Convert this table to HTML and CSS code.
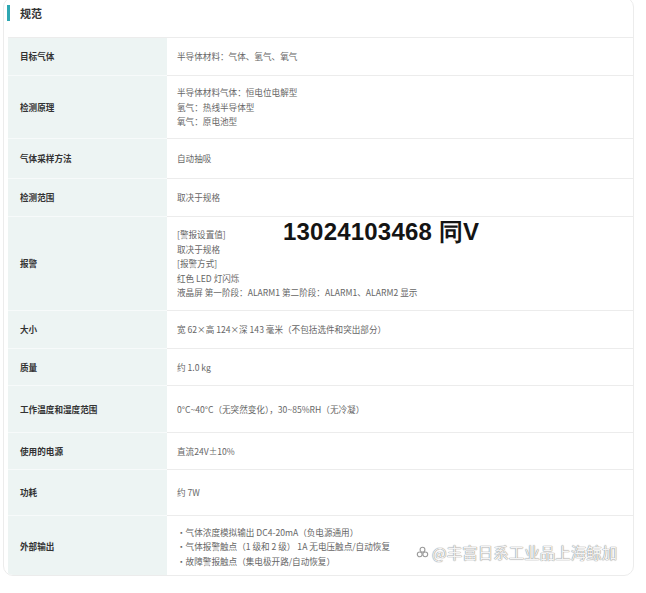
FILE: index.html
```html
<!DOCTYPE html>
<html lang="zh">
<head>
    <meta charset="UTF-8">
    <meta name="viewport" content="width=device-width, initial-scale=1.0">
    <title>规范</title>
    <link rel="stylesheet" href="styles.css">
</head>
<body>

<div class="card">
    <div class="card-head">
        <span class="accent"></span>
        <h2>规范</h2>
    </div>

    <div class="spec">
        <div class="key">目标气体</div>
        <div class="val">半导体材料：气体、氢气、氧气</div>

        <div class="key">检测原理</div>
        <div class="val">半导体材料气体：恒电位电解型<br>氢气：热线半导体型<br>氧气：原电池型</div>

        <div class="key">气体采样方法</div>
        <div class="val">自动抽吸</div>

        <div class="key">检测范围</div>
        <div class="val">取决于规格</div>

        <div class="key">报警</div>
        <div class="val">[警报设置值]<br>取决于规格<br>[报警方式]<br>红色 LED 灯闪烁<br>液晶屏 第一阶段：ALARM1 第二阶段：ALARM1、ALARM2 显示</div>

        <div class="key">大小</div>
        <div class="val">宽 62×高 124×深 143 毫米（不包括选件和突出部分）</div>

        <div class="key">质量</div>
        <div class="val">约 1.0 kg</div>

        <div class="key">工作温度和湿度范围</div>
        <div class="val">0°C~40°C（无突然变化），30~85%RH（无冷凝）</div>

        <div class="key">使用的电源</div>
        <div class="val">直流24V±10%</div>

        <div class="key">功耗</div>
        <div class="val">约 7W</div>

        <div class="key last">外部输出</div>
        <div class="val last">・气体浓度模拟输出 DC4-20mA（负电源通用）<br>・气体报警触点（1 级和 2 级） 1A 无电压触点/自动恢复<br>・故障警报触点（集电极开路/自动恢复）</div>
    </div>

    <div class="phone">13024103468 同V</div>

    <div class="watermark">
        <svg width="13" height="13" viewBox="0 0 14 14">
            <g fill="none" stroke="#9a9a9a" stroke-width="1.2">
                <circle cx="7" cy="4" r="2.6"/>
                <circle cx="4" cy="9" r="2.6"/>
                <circle cx="10" cy="9" r="2.6"/>
            </g>
        </svg>
        <span>@丰富日系工业品上海鲸加</span>
    </div>
</div>

</body>
</html>
```

FILE: styles.css
```css
body {
    margin: 0;
    background-color: #fff;
    font-family: "Noto Sans CJK SC", "Noto Sans", sans-serif;
}
.card {
    position: relative;
    width: 631px;
    height: 579px;
    margin-top: -3px;
    margin-left: 3px;
    border: 1px solid #ececec;
    border-radius: 10px;
    box-sizing: border-box;
    overflow: hidden;
}
.card-head {
    display: flex;
    align-items: center;
    height: 39px;
    padding-left: 3px;
    padding-bottom: 9px;
    box-sizing: border-box;
}
.accent {
    width: 3px;
    height: 16px;
    background-color: #2ea7b2;
    margin-right: 10px;
}
.card-head h2 {
    margin: 0;
    font-size: 11px;
    font-weight: bold;
    color: #333;
}
.spec {
    display: grid;
    grid-template-columns: 159px 1fr;
    grid-template-rows: 38px 63px 40px 38px 94px 38px 37px 47px 37px 46px 61px;
    margin-left: 4px;
    border-top: 1px solid #ececec;
    font-size: 8.6px;
    line-height: 14.4px;
}
.key {
    display: flex;
    align-items: center;
    padding-left: 12px;
    background-color: #edf4f3;
    border-bottom: 1px solid #f7fafa;
    font-weight: bold;
    color: #333;
}
.val {
    display: flex;
    align-items: center;
    padding-left: 10px;
    border-bottom: 1px solid #ececec;
    color: #666;
}
.key.last,
.val.last {
    border-bottom: none;
}
.phone {
    position: absolute;
    left: 279px;
    top: 218px;
    font-family: "Liberation Sans", Arial, sans-serif;
    font-size: 24px;
    font-weight: bold;
    color: #141414;
    letter-spacing: 0.2px;
}
.watermark {
    position: absolute;
    left: 412px;
    top: 543px;
    display: flex;
    align-items: center;
    gap: 3px;
    font-size: 15.5px;
    color: #f4f4f4;
    text-shadow: 0 0 1px #888, 0 0 1px #888;
}
```
